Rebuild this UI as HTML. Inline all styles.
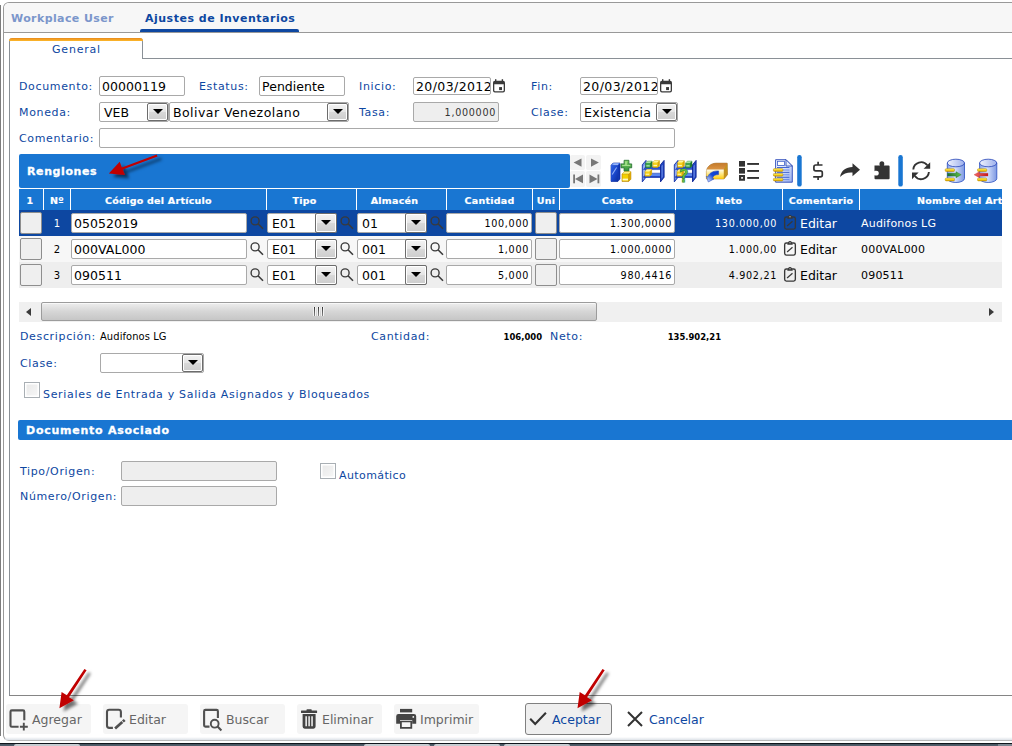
<!DOCTYPE html>
<html lang="es">
<head>
<meta charset="utf-8">
<title>Ajustes de Inventarios</title>
<style>
html,body{margin:0;padding:0;}
body{width:1012px;height:746px;position:relative;overflow:hidden;background:#fff;font-family:"DejaVu Sans","Liberation Sans",sans-serif;font-size:11px;color:#000;}
.abs,.abs *{box-sizing:border-box;}
.abs{position:absolute;}
.lbl{position:absolute;color:#0d47a1;font-size:11px;line-height:14px;letter-spacing:0.65px;margin:1px 0 0 0;white-space:nowrap;}
.inp{position:absolute;background:#fff;border:1px solid #a9a9a9;border-radius:2px;font-size:12.5px;line-height:19px;letter-spacing:0.05px;padding-left:2px;white-space:nowrap;overflow:hidden;box-sizing:border-box;color:#000;}
.dis{background:#eee;}
.num{font-size:9.6px;text-align:right;padding-right:2px;padding-left:0;line-height:20px;letter-spacing:0.7px;}
.dd{position:absolute;box-sizing:border-box;border:1px solid #6c6c6c;border-radius:2px;background:linear-gradient(#f3f3f3 0,#e6e6e6 48%,#d8d8d8 52%,#cdcdcd 100%);box-shadow:inset 0 0 0 1px #fff;}
.dd:after{content:"";position:absolute;left:50%;top:50%;margin:-3px 0 0 -5px;border:5px solid transparent;border-top:5px solid #000;border-bottom:0;}
.gbtn{position:absolute;box-sizing:border-box;border:1px solid #8e8e8e;border-radius:2px;background:#efefef;}
.hd{position:absolute;top:189px;height:21px;color:#fff;-webkit-text-stroke:0.2px #fff;font-weight:bold;font-size:9.5px;line-height:23px;text-align:center;white-space:nowrap;letter-spacing:0.25px;box-sizing:border-box;}
.sep{position:absolute;top:189px;height:21px;width:1px;background:#fff;}
.row{position:absolute;left:19px;width:983px;}
.tah{font-family:"DejaVu Sans Condensed","DejaVu Sans","Liberation Sans",sans-serif;}
.bbtn{position:absolute;top:704px;height:30px;width:85px;background:#f5f5f5;border-radius:3px;box-sizing:border-box;}
.bbtn span{position:absolute;left:26px;top:8px;font-size:12.5px;line-height:16px;color:#666;white-space:nowrap;}
</style>
</head>
<body>
<!-- outer frame -->
<div class="abs" style="left:0;top:5px;width:1px;height:731px;background:#7c7c7c;"></div>
<div class="abs" style="left:3px;top:2px;width:1020px;height:739px;border:1px solid #999;border-bottom-color:#b8b8b8;border-radius:6px;background:#fff;"></div>
<div class="abs" style="left:4px;top:3px;width:1008px;height:29px;background:#f7f7f7;border-top-left-radius:5px;"></div>
<div class="abs" style="left:4px;top:32px;width:1008px;height:1px;background:#999;"></div>
<div class="abs" style="left:5px;top:737px;width:1007px;height:3px;background:linear-gradient(rgba(225,230,236,0),#dde2e8);"></div>
<div class="abs" style="left:0;top:743px;width:1012px;height:3px;background:linear-gradient(#10161c 0,#10161c 34%,#46535f 34%,#56636f 100%);"></div>
<div class="abs" style="left:14px;top:744px;width:66px;height:2px;background:#c8cdd2;border-radius:2px 2px 0 0;"></div>
<div class="abs" style="left:364px;top:744px;width:66px;height:2px;background:#c8cdd2;border-radius:2px 2px 0 0;"></div>
<div class="abs" style="left:434px;top:744px;width:66px;height:2px;background:#c8cdd2;border-radius:2px 2px 0 0;"></div>
<div class="abs" style="left:504px;top:744px;width:66px;height:2px;background:#c8cdd2;border-radius:2px 2px 0 0;"></div>
<div class="abs" style="left:998px;top:744px;width:14px;height:2px;background:#7d8791;"></div>

<!-- top tabs -->
<div class="abs" style="left:11px;top:11px;font-size:11px;line-height:15px;font-weight:bold;color:#7b96cb;letter-spacing:0.4px;white-space:nowrap;">Workplace User</div>
<div class="abs" style="left:145px;top:11px;font-size:11px;line-height:15px;font-weight:bold;color:#0d47a1;letter-spacing:0.5px;white-space:nowrap;">Ajustes de Inventarios</div>
<div class="abs" style="left:140px;top:29px;width:159px;height:3px;background:#0d47a1;border-radius:2px 2px 0 0;"></div>

<!-- inner panel -->
<div class="abs" style="left:9px;top:58px;width:1010px;height:638px;border:1px solid #8a9096;border-bottom-color:#858585;border-right:0;"></div>
<div class="abs" style="left:9px;top:38px;width:134px;height:21px;border:1px solid #8a9096;border-bottom:0;border-top:0;background:#fff;border-radius:4px 4px 0 0;"></div>
<div class="abs" style="left:9px;top:38px;width:134px;height:3px;background:linear-gradient(#e8891a,#fdb92c);border-radius:4px 4px 0 0;"></div>
<div class="abs" style="left:52px;top:42px;font-size:11px;line-height:15px;color:#0d47a1;letter-spacing:0.8px;">General</div>

<!-- form -->
<div class="lbl" style="left:19px;top:79px;">Documento:</div>
<div class="inp" style="left:99px;top:76px;width:86px;height:20px;">00000119</div>
<div class="lbl" style="left:199px;top:79px;">Estatus:</div>
<div class="inp" style="left:259px;top:76px;width:86px;height:20px;">Pendiente</div>
<div class="lbl" style="left:359px;top:79px;">Inicio:</div>
<div class="inp" style="left:413px;top:77px;width:78px;height:18px;line-height:17px;letter-spacing:0.4px;">20/03/2012</div>
<div class="lbl" style="left:531px;top:79px;">Fin:</div>
<div class="inp" style="left:580px;top:77px;width:78px;height:18px;line-height:17px;letter-spacing:0.4px;">20/03/2012</div>

<div class="lbl" style="left:19px;top:105px;">Moneda:</div>
<div class="inp" style="left:99px;top:102px;width:70px;height:20px;padding-left:4px;">VEB</div>
<div class="dd" style="left:147px;top:103px;width:21px;height:18px;"></div>
<div class="inp" style="left:169px;top:102px;width:180px;height:20px;padding-left:3px;letter-spacing:0.45px;">Bolivar Venezolano</div>
<div class="dd" style="left:327px;top:103px;width:21px;height:18px;"></div>
<div class="lbl" style="left:359px;top:105px;">Tasa:</div>
<div class="inp dis num" style="left:413px;top:102px;width:86px;height:20px;color:#333;line-height:19px;">1,000000</div>
<div class="lbl" style="left:531px;top:105px;">Clase:</div>
<div class="inp" style="left:580px;top:102px;width:98px;height:20px;padding-left:3px;letter-spacing:0.35px;">Existencia</div>
<div class="dd" style="left:656px;top:103px;width:21px;height:18px;"></div>

<div class="lbl" style="left:19px;top:131px;">Comentario:</div>
<div class="inp" style="left:99px;top:128px;width:576px;height:20px;"></div>

<svg width="0" height="0" style="position:absolute"><defs>
<g id="cal"><path d="M1.9 1.8 H10.1 Q12 1.8 12 3.7 V11.2 Q12 13.1 10.1 13.1 H1.9 Q0 13.1 0 11.2 V3.7 Q0 1.8 1.9 1.8 Z M1.3 5 V11 Q1.3 11.8 2.1 11.8 H9.9 Q10.7 11.8 10.7 11 V5 Z" fill="#3a3a3a" fill-rule="evenodd"/><rect x="2" y="0.2" width="1.4" height="2.4" fill="#3a3a3a"/><rect x="8.7" y="0.2" width="1.4" height="2.4" fill="#3a3a3a"/><rect x="6.1" y="7.8" width="2.9" height="2.9" fill="#3a3a3a"/></g>
</defs></svg>
<svg class="abs" style="left:493px;top:79px;" width="13" height="14.5" viewBox="0 0 13 14" preserveAspectRatio="none"><use href="#cal"/></svg>
<svg class="abs" style="left:660px;top:79px;" width="13" height="14.5" viewBox="0 0 13 14" preserveAspectRatio="none"><use href="#cal"/></svg>

<!-- grid -->
<svg width="0" height="0" style="position:absolute">
<defs>
<g id="mag"><circle cx="6.1" cy="4.9" r="4" fill="none" stroke="#3a3a3a" stroke-width="1.4"/><path d="M9 7.8 L14 12.8" stroke="#3a3a3a" stroke-width="1.6"/></g>
<g id="clip"><rect x="1.65" y="2.95" width="10.7" height="12.1" rx="1.7" fill="none" stroke="#383838" stroke-width="1.35"/><path d="M4.2 4.7 L5.2 2.2 Q5.6 0.9 7 0.9 Q8.4 0.9 8.8 2.2 L9.8 4.7 Z" fill="#383838"/><circle cx="7" cy="2.7" r="0.75" fill="#a8a8a8"/><path d="M4.1 11.9 L9.5 7.3" stroke="#383838" stroke-width="1.25"/></g>
</defs>
</svg>
<div class="abs" style="left:19px;top:154px;width:551px;height:34px;background:#1976d2;border-radius:2px;"></div>
<div class="abs" style="left:27px;top:165px;font-size:11px;line-height:14px;font-weight:bold;color:#fff;letter-spacing:0.6px;-webkit-text-stroke:0.3px #fff;">Renglones</div>
<div class="abs" style="left:19px;top:189px;width:983px;height:21px;background:#1976d2;"></div>
<div class="hd" style="left:18px;width:24px;">1</div>
<div class="sep" style="left:43px;"></div>
<div class="hd" style="left:44px;width:26px;">Nº</div>
<div class="sep" style="left:70px;"></div>
<div class="hd" style="left:71px;width:195px;padding-right:20px;">Código del Artículo</div>
<div class="sep" style="left:266px;"></div>
<div class="hd" style="left:267px;width:89px;padding-right:14px;">Tipo</div>
<div class="sep" style="left:356px;"></div>
<div class="hd" style="left:357px;width:89px;padding-right:14px;">Almacén</div>
<div class="sep" style="left:446px;"></div>
<div class="hd" style="left:447px;width:85px;">Cantidad</div>
<div class="sep" style="left:532px;"></div>
<div class="hd" style="left:533px;width:26px;">Uni</div>
<div class="sep" style="left:559px;"></div>
<div class="hd" style="left:560px;width:115px;">Costo</div>
<div class="sep" style="left:675px;"></div>
<div class="hd" style="left:676px;width:106px;">Neto</div>
<div class="sep" style="left:782px;"></div>
<div class="hd" style="left:783px;width:76px;">Comentario</div>
<div class="sep" style="left:859px;"></div>
<div class="abs" style="left:860px;top:189px;width:142px;height:21px;overflow:hidden;"><div class="hd" style="left:57px;top:0;text-align:left;">Nombre del Artículo</div></div>
<div class="row" style="top:210px;height:26px;background:#0d47a1;"></div>
<div class="gbtn" style="left:20px;top:212px;width:22px;height:22px;"></div>
<div class="abs" style="left:44px;top:217px;width:26px;text-align:center;font-size:10px;line-height:13px;color:#fff;">1</div>
<div class="inp" style="left:71px;top:213px;width:176px;height:20px;padding-left:2px;">05052019</div>
<svg class="abs mg" style="left:249px;top:216px;" width="15" height="15" viewBox="0 0 15 15"><use href="#mag"/></svg>
<div class="inp" style="left:267px;top:213px;width:70px;height:20px;padding-left:4px;">E01</div>
<div class="dd" style="left:315px;top:213px;width:22px;height:20px;"></div>
<svg class="abs mg" style="left:339px;top:216px;" width="15" height="15" viewBox="0 0 15 15"><use href="#mag"/></svg>
<div class="inp" style="left:357px;top:213px;width:70px;height:20px;padding-left:4px;">01</div>
<div class="dd" style="left:405px;top:213px;width:22px;height:20px;"></div>
<svg class="abs mg" style="left:429px;top:216px;" width="15" height="15" viewBox="0 0 15 15"><use href="#mag"/></svg>
<div class="inp num" style="left:446px;top:213px;width:86px;height:20px;">100,000</div>
<div class="gbtn" style="left:535px;top:212px;width:22px;height:22px;"></div>
<div class="inp num" style="left:559px;top:213px;width:116px;height:20px;">1.300,0000</div>
<div class="abs" style="left:676px;top:217px;width:101px;text-align:right;font-size:9.6px;line-height:13px;letter-spacing:0.7px;color:#fff;">130.000,00</div>
<svg class="abs" style="left:783px;top:214px;" width="14" height="16" viewBox="0 0 14 16"><use href="#clip"/></svg>
<div class="abs" style="left:800px;top:216px;font-size:12.5px;line-height:16px;color:#fff;">Editar</div>
<div class="abs" style="left:861px;top:217px;font-size:11px;line-height:14px;letter-spacing:0.2px;color:#fff;">Audifonos LG</div>
<div class="row" style="top:236px;height:26px;background:#f7f7f7;"></div>
<div class="gbtn" style="left:20px;top:238px;width:22px;height:22px;"></div>
<div class="abs" style="left:44px;top:243px;width:26px;text-align:center;font-size:10px;line-height:13px;color:#000;">2</div>
<div class="inp" style="left:71px;top:239px;width:176px;height:20px;padding-left:2px;">000VAL000</div>
<svg class="abs mg" style="left:249px;top:242px;" width="15" height="15" viewBox="0 0 15 15"><use href="#mag"/></svg>
<div class="inp" style="left:267px;top:239px;width:70px;height:20px;padding-left:4px;">E01</div>
<div class="dd" style="left:315px;top:239px;width:22px;height:20px;"></div>
<svg class="abs mg" style="left:339px;top:242px;" width="15" height="15" viewBox="0 0 15 15"><use href="#mag"/></svg>
<div class="inp" style="left:357px;top:239px;width:70px;height:20px;padding-left:4px;">001</div>
<div class="dd" style="left:405px;top:239px;width:22px;height:20px;"></div>
<svg class="abs mg" style="left:429px;top:242px;" width="15" height="15" viewBox="0 0 15 15"><use href="#mag"/></svg>
<div class="inp num" style="left:446px;top:239px;width:86px;height:20px;">1,000</div>
<div class="gbtn" style="left:535px;top:238px;width:22px;height:22px;"></div>
<div class="inp num" style="left:559px;top:239px;width:116px;height:20px;">1.000,0000</div>
<div class="abs" style="left:676px;top:243px;width:101px;text-align:right;font-size:9.6px;line-height:13px;letter-spacing:0.7px;color:#000;">1.000,00</div>
<svg class="abs" style="left:783px;top:240px;" width="14" height="16" viewBox="0 0 14 16"><use href="#clip"/></svg>
<div class="abs" style="left:800px;top:242px;font-size:12.5px;line-height:16px;color:#000;">Editar</div>
<div class="abs" style="left:861px;top:243px;font-size:11px;line-height:14px;letter-spacing:0.2px;color:#000;">000VAL000</div>
<div class="row" style="top:262px;height:26px;background:#eeeeee;"></div>
<div class="gbtn" style="left:20px;top:264px;width:22px;height:22px;"></div>
<div class="abs" style="left:44px;top:269px;width:26px;text-align:center;font-size:10px;line-height:13px;color:#000;">3</div>
<div class="inp" style="left:71px;top:265px;width:176px;height:20px;padding-left:2px;">090511</div>
<svg class="abs mg" style="left:249px;top:268px;" width="15" height="15" viewBox="0 0 15 15"><use href="#mag"/></svg>
<div class="inp" style="left:267px;top:265px;width:70px;height:20px;padding-left:4px;">E01</div>
<div class="dd" style="left:315px;top:265px;width:22px;height:20px;"></div>
<svg class="abs mg" style="left:339px;top:268px;" width="15" height="15" viewBox="0 0 15 15"><use href="#mag"/></svg>
<div class="inp" style="left:357px;top:265px;width:70px;height:20px;padding-left:4px;">001</div>
<div class="dd" style="left:405px;top:265px;width:22px;height:20px;"></div>
<svg class="abs mg" style="left:429px;top:268px;" width="15" height="15" viewBox="0 0 15 15"><use href="#mag"/></svg>
<div class="inp num" style="left:446px;top:265px;width:86px;height:20px;">5,000</div>
<div class="gbtn" style="left:535px;top:264px;width:22px;height:22px;"></div>
<div class="inp num" style="left:559px;top:265px;width:116px;height:20px;">980,4416</div>
<div class="abs" style="left:676px;top:269px;width:101px;text-align:right;font-size:9.6px;line-height:13px;letter-spacing:0.7px;color:#000;">4.902,21</div>
<svg class="abs" style="left:783px;top:266px;" width="14" height="16" viewBox="0 0 14 16"><use href="#clip"/></svg>
<div class="abs" style="left:800px;top:268px;font-size:12.5px;line-height:16px;color:#000;">Editar</div>
<div class="abs" style="left:861px;top:269px;font-size:11px;line-height:14px;letter-spacing:0.2px;color:#000;">090511</div>

<!-- toolbar icons -->
<svg class="abs" style="left:566px;top:150px;" width="446" height="42" viewBox="566 150 446 42">
<defs>
<linearGradient id="gBlue" x1="0" y1="0" x2="1" y2="0"><stop offset="0" stop-color="#3d6fe0"/><stop offset="0.5" stop-color="#1b45c0"/><stop offset="1" stop-color="#0c2c94"/></linearGradient>
<linearGradient id="gBlueF" x1="0" y1="0" x2="1" y2="1"><stop offset="0" stop-color="#2f64e4"/><stop offset="0.5" stop-color="#1a48cc"/><stop offset="1" stop-color="#0c2fa0"/></linearGradient>
<linearGradient id="gPlus" x1="0" y1="0" x2="0" y2="1"><stop offset="0" stop-color="#86d468"/><stop offset="1" stop-color="#2f8e38"/></linearGradient>
<linearGradient id="gBoxTop" x1="0" y1="0" x2="0" y2="1"><stop offset="0" stop-color="#c47a2c"/><stop offset="1" stop-color="#e09a48"/></linearGradient>
<linearGradient id="gBoxF" x1="0" y1="0" x2="0" y2="1"><stop offset="0" stop-color="#fffdf0"/><stop offset="0.45" stop-color="#ffe98a"/><stop offset="1" stop-color="#ffcc10"/></linearGradient>
<linearGradient id="gArr" x1="1" y1="0" x2="0" y2="1"><stop offset="0" stop-color="#0a3ccc"/><stop offset="0.45" stop-color="#1448d8"/><stop offset="1" stop-color="#eef3ff"/></linearGradient>
<linearGradient id="gYel" x1="0" y1="0" x2="0" y2="1"><stop offset="0" stop-color="#fff27a"/><stop offset="0.5" stop-color="#f7d41a"/><stop offset="1" stop-color="#d9a400"/></linearGradient>
<linearGradient id="gGrn" x1="0" y1="0" x2="0" y2="1"><stop offset="0" stop-color="#8fd88a"/><stop offset="1" stop-color="#2a8f2a"/></linearGradient>
<linearGradient id="gCyl" x1="0" y1="0" x2="1" y2="0"><stop offset="0" stop-color="#8aa6ec"/><stop offset="0.45" stop-color="#d5e0fb"/><stop offset="1" stop-color="#7d98e2"/></linearGradient>
<linearGradient id="gCylTop" x1="0" y1="0" x2="1" y2="0"><stop offset="0" stop-color="#eef2fd"/><stop offset="1" stop-color="#9db0ec"/></linearGradient>
<linearGradient id="gGA" x1="0" y1="0" x2="1" y2="0"><stop offset="0" stop-color="#1c6c2e"/><stop offset="1" stop-color="#63c24a"/></linearGradient>
<linearGradient id="gRA" x1="0" y1="0" x2="1" y2="0"><stop offset="0" stop-color="#ee6a6a"/><stop offset="1" stop-color="#c81818"/></linearGradient>
<linearGradient id="gDoc" x1="0" y1="0" x2="1" y2="1"><stop offset="0" stop-color="#f6f9ff"/><stop offset="0.5" stop-color="#d3defa"/><stop offset="1" stop-color="#98aeec"/></linearGradient>
<linearGradient id="gBox" x1="0" y1="0" x2="0" y2="1"><stop offset="0" stop-color="#fff0a0"/><stop offset="1" stop-color="#f0b820"/></linearGradient>
</defs>
<!-- nav buttons -->
<g fill="#f3f3f3"><rect x="570" y="155" width="15" height="15" rx="2"/><rect x="586" y="155" width="15" height="15" rx="2"/><rect x="570" y="171" width="15" height="16" rx="2"/><rect x="586" y="171" width="15" height="16" rx="2"/></g>
<g fill="#777">
<path d="M581.5 158.5 L581.5 166.8 L573.6 162.6 Z"/>
<path d="M591 158.5 L591 166.8 L598.9 162.6 Z"/>
<path d="M583 174.5 L583 183.3 L575 178.9 Z"/><rect x="573.2" y="174.5" width="1.8" height="8.8"/>
<path d="M589.5 174.5 L589.5 183.3 L597.5 178.9 Z"/><rect x="597.5" y="174.5" width="1.8" height="8.8"/>
</g>
<!-- icon1: blue box + plus + yellow cube -->
<g>
<path d="M611 165.3 L613.2 163 L620 163 L620 179 L617.9 181.4 L611 181.4 Z" fill="#1238b4" stroke="#0a2690" stroke-width="0.6" stroke-linejoin="round"/>
<path d="M611 165.3 H617.9 V181.4 H611 Z" fill="url(#gBlueF)"/>
<path d="M611 165.3 L613.2 163 L620 163 L617.9 165.3 Z" fill="#5f8cf0"/>
<path d="M613.3 164.2 H618" stroke="#c8d8ff" stroke-width="0.8"/>
<path d="M612.2 174.5 L616.6 167.5" stroke="#a9c4ff" stroke-width="1.1" opacity="0.85"/>
<path d="M624.1 160.3 h4.8 v3.6 h2.8 v3.9 h-2.8 v3.4 h-4.8 v-3.4 h-3.1 v-3.9 h3.1 z" fill="url(#gPlus)" stroke="#1e6a2c" stroke-width="0.8" stroke-linejoin="round"/>
<path d="M625.2 161.6 h1.6 v3.3 h-1.6 z M622.2 165 h8 v1 h-8 z" fill="#b6ea9c" opacity="0.8"/>
<path d="M622 174 L624.3 171.7 L630.9 171.7 L630.9 179.2 L628.6 181.5 L622 181.5 Z" fill="#f4d000" stroke="#b07c08" stroke-width="0.6" stroke-linejoin="round"/>
<path d="M622 174 L624.3 171.7 L630.9 171.7 L628.6 174 Z" fill="#fff27a"/>
<path d="M628.6 174 L630.9 171.7 L630.9 179.2 L628.6 181.5 Z" fill="#d8a406"/>
<path d="M622.6 178.6 H628 V180.4 H622.6 Z" fill="#fff8c4"/>
<path d="M622 174 H628.6 V181.5" fill="none" stroke="#b98a10" stroke-width="0.5"/>
</g>
<!-- icon2: shelf -->
<g><path d="M642.3 164.8 L646 160.4 L646 177.2 L642.3 181.9 Z" fill="#6f90e8" stroke="#1230a4" stroke-width="0.9" stroke-linejoin="round"/><path d="M643.2 166.5 L645.2 164 L645.2 176 L643.2 178.8 Z" fill="#9db6f4"/><path d="M643.5 177.4 L646 173.2 L663.6 173.2 L661 177.4 Z" fill="#5b88ee" stroke="#1230a4" stroke-width="0.5"/><path d="M643.5 176.2 H661 V177.6 H643.5 Z" fill="#1838b4"/><path d="M643.5 169.6 L645.6 166.8 L663.6 166.8 L661 169.6 Z" fill="#2c54d2" stroke="#1230a4" stroke-width="0.5"/><path d="M660.5 164.8 L664.1 160.4 L664.1 177.2 L660.5 181.9 Z" fill="#2348c4" stroke="#0e2694" stroke-width="0.9" stroke-linejoin="round"/><path d="M661.6 166 L662.6 164.8 L662.6 177 L661.6 178.4 Z" fill="#7d9cec" opacity="0.9"/><path d="M645.0 171.4 L646.8 169.6 L651.6 169.6 L651.6 174.4 L649.8 176.2 L645.0 176.2 Z" fill="#f6d21c" stroke="#b8860b" stroke-width="0.5"/><path d="M645.0 171.4 L646.8 169.6 L651.6 169.6 L649.8 171.4 Z" fill="#fff59a"/><path d="M649.8 171.4 L651.6 169.6 L651.6 174.4 L649.8 176.2 Z" fill="#d9a80a"/><rect x="645.6" y="173.7" width="3.6" height="1.1" fill="#fffbd0" opacity="0.85"/><path d="M645.7 163.0 L647.5 161.2 L652.1 161.2 L652.1 166.0 L650.3 167.8 L645.7 167.8 Z" fill="#3fa64a" stroke="#1a6a24" stroke-width="0.5"/><path d="M645.7 163.0 L647.5 161.2 L652.1 161.2 L650.3 163.0 Z" fill="#a8e0a0"/><path d="M650.3 163.0 L652.1 161.2 L652.1 166.0 L650.3 167.8 Z" fill="#1f7a2c"/><rect x="646.3" y="165.3" width="3.4" height="1.1" fill="#d8f4d0" opacity="0.85"/><path d="M652.8 162.4 L654.6 160.6 L659.4 160.6 L659.4 165.7 L657.6 167.5 L652.8 167.5 Z" fill="#f6d21c" stroke="#b8860b" stroke-width="0.5"/><path d="M652.8 162.4 L654.6 160.6 L659.4 160.6 L657.6 162.4 Z" fill="#fff59a"/><path d="M657.6 162.4 L659.4 160.6 L659.4 165.7 L657.6 167.5 Z" fill="#d9a80a"/><rect x="653.4" y="164.9" width="3.6" height="1.1" fill="#fffbd0" opacity="0.85"/></g>
<!-- icon3: shelf with ? -->
<g><path d="M674.3 164.8 L678 160.4 L678 177.2 L674.3 181.9 Z" fill="#6f90e8" stroke="#1230a4" stroke-width="0.9" stroke-linejoin="round"/><path d="M675.2 166.5 L677.2 164 L677.2 176 L675.2 178.8 Z" fill="#9db6f4"/><path d="M675.5 177.4 L678 173.2 L695.6 173.2 L693 177.4 Z" fill="#5b88ee" stroke="#1230a4" stroke-width="0.5"/><path d="M675.5 176.2 H693 V177.6 H675.5 Z" fill="#1838b4"/><path d="M675.5 169.6 L677.6 166.8 L695.6 166.8 L693 169.6 Z" fill="#2c54d2" stroke="#1230a4" stroke-width="0.5"/><path d="M692.5 164.8 L696.1 160.4 L696.1 177.2 L692.5 181.9 Z" fill="#2348c4" stroke="#0e2694" stroke-width="0.9" stroke-linejoin="round"/><path d="M693.6 166 L694.6 164.8 L694.6 177 L693.6 178.4 Z" fill="#7d9cec" opacity="0.9"/><path d="M677.0 171.4 L678.8 169.6 L683.6 169.6 L683.6 174.4 L681.8 176.2 L677.0 176.2 Z" fill="#f6d21c" stroke="#b8860b" stroke-width="0.5"/><path d="M677.0 171.4 L678.8 169.6 L683.6 169.6 L681.8 171.4 Z" fill="#fff59a"/><path d="M681.8 171.4 L683.6 169.6 L683.6 174.4 L681.8 176.2 Z" fill="#d9a80a"/><rect x="677.6" y="173.7" width="3.6" height="1.1" fill="#fffbd0" opacity="0.85"/><path d="M677.5 162.5 L679.3 160.7 L684.3 160.7 L684.3 165.8 L682.5 167.6 L677.5 167.6 Z" fill="#f6d21c" stroke="#b8860b" stroke-width="0.5"/><path d="M677.5 162.5 L679.3 160.7 L684.3 160.7 L682.5 162.5 Z" fill="#fff59a"/><path d="M682.5 162.5 L684.3 160.7 L684.3 165.8 L682.5 167.6 Z" fill="#d9a80a"/><rect x="678.1" y="165.0" width="3.8" height="1.1" fill="#fffbd0" opacity="0.85"/><path d="M685.6 163.0 L687.4 161.2 L692.0 161.2 L692.0 166.0 L690.2 167.8 L685.6 167.8 Z" fill="#3fa64a" stroke="#1a6a24" stroke-width="0.5"/><path d="M685.6 163.0 L687.4 161.2 L692.0 161.2 L690.2 163.0 Z" fill="#a8e0a0"/><path d="M690.2 163.0 L692.0 161.2 L692.0 166.0 L690.2 167.8 Z" fill="#1f7a2c"/><rect x="686.2" y="165.3" width="3.4" height="1.1" fill="#d8f4d0" opacity="0.85"/></g>
<text x="679.3" y="182.2" font-family="'DejaVu Sans','Liberation Sans',sans-serif" font-size="17.5" fill="#63bd42" stroke="#2a8424" stroke-width="1.1" paint-order="stroke">?</text>
<!-- icon4: box with arrow -->
<g>
<path d="M706.4 171 C707 167 710.5 163.4 716 163.2 L727.2 163.2 L727.4 174.8 L723.9 178.9 L706.4 178.9 Z" fill="#c88a2c" stroke="#8e5e1c" stroke-width="0.6" stroke-linejoin="round"/>
<path d="M706.4 171 C707 167 710.5 163.4 716 163.2 L727.2 163.2 L723.9 169.4 L706.6 169.6 Z" fill="url(#gBoxTop)"/>
<path d="M706.4 169.5 H723.9 V178.9 H706.4 Z" fill="url(#gBoxF)"/>
<path d="M723.9 169.4 L727.2 163.4 L727.4 174.8 L723.9 178.9 Z" fill="#c4921e"/>
<path d="M718.6 170.9 C711.8 170.6 708.6 174 707.8 177 L706.3 176.4 L708.3 182 L714 178.9 L712.4 178.3 C713.2 176 714.8 174.6 718.6 174.6 Z" fill="url(#gArr)" stroke="#1a3fb4" stroke-width="0.5" stroke-linejoin="round"/>
</g>
<!-- icon5: list -->
<g fill="#333">
<rect x="739" y="161" width="6" height="5.6"/><rect x="739" y="168" width="6" height="5.6"/>
<path d="M739 175 h6 v5.7 h-6 z M741.2 177 v1.8 h1.7 v-1.8 z" fill-rule="evenodd"/>
<rect x="747.2" y="163" width="11.8" height="1.9"/><rect x="747.2" y="170" width="11.8" height="1.9"/><rect x="747.2" y="177" width="11.8" height="1.9"/>
</g>
<!-- icon6: document with yellow bars -->
<g>
<path d="M775.6 159.7 L786 159.7 L792.3 166 L792.3 182.2 L775.6 182.2 Z" fill="url(#gDoc)" stroke="#2846b8" stroke-width="0.9" stroke-linejoin="round"/>
<path d="M786 159.7 L786 166 L792.3 166 Z" fill="#e4ebfc" stroke="#2040b0" stroke-width="0.8" stroke-linejoin="round"/>
<rect x="777.6" y="161.3" width="7" height="4.2" fill="#fff" stroke="#3a5cc8" stroke-width="0.8"/>
<path d="M777 167.5 H789.4 M777 172.4 H789.4 M777 177.3 H789.4" stroke="#3358cc" stroke-width="0.9"/>
<path d="M783 170 H789.4 M783 174.8 H789.4 M783 179.6 H789.4" stroke="#5a7ee2" stroke-width="0.8"/>
<g fill="url(#gYel)" stroke="#a87c08" stroke-width="0.5"><rect x="773.4" y="168.6" width="9.5" height="2.8" rx="1"/><rect x="773.4" y="173.4" width="9.5" height="2.8" rx="1"/><rect x="773.4" y="178.2" width="9.5" height="2.8" rx="1"/></g>
</g>
<!-- separators -->
<rect x="797.2" y="155" width="4.5" height="31.6" rx="2.2" fill="#1976d2"/>
<rect x="898.3" y="155" width="4.5" height="31.6" rx="2.2" fill="#1976d2"/>
<!-- dollar -->
<g fill="none" stroke="#333" stroke-width="1.7">
<path d="M822.5 165 H815.8 Q813.9 165 813.9 166.9 V169 Q813.9 170.9 815.8 170.9 H820.4 Q822.3 170.9 822.3 172.8 V175 Q822.3 176.9 820.4 176.9 H813.2"/>
<path d="M818.1 161.8 V165 M818.1 176.9 V180"/>
</g>
<!-- share arrow -->
<path d="M840 177 C841.5 170 846 167.3 852.5 167 L852.5 163.3 L860 169.8 L852.5 176.3 L852.5 172.6 C847.5 172.3 843.5 173.5 840 177 Z" fill="#333"/>
<!-- puzzle -->
<path d="M874.5 165.5 H880 C879 164.6 879.3 161.2 881.9 161.2 C884.5 161.2 884.8 164.6 883.8 165.5 H888.6 Q889.6 165.5 889.6 166.5 V178.2 Q889.6 179.2 888.6 179.2 H875.5 Q874.5 179.2 874.5 178.2 V175.2 C876.6 176.2 878.8 175.3 878.8 173.2 C878.8 171.1 876.6 170.3 874.5 171.2 Z" fill="#333"/>
<!-- refresh -->
<g fill="none" stroke="#333" stroke-width="1.9">
<path d="M913.3 169.5 A7.8 7.8 0 0 1 927.3 165.3"/>
<path d="M928.9 172 A7.8 7.8 0 0 1 914.9 176"/>
</g>
<path d="M930.2 162.2 V168.8 H923.6 Z" fill="#333"/>
<path d="M912 179.2 V172.6 H918.6 Z" fill="#333"/>
<!-- db icons -->
<g id="cyl">
<path d="M947.3 163 V178.5 A8.6 4 0 0 0 964.5 178.5 V163 Z" fill="url(#gCyl)" stroke="#2a4fc0" stroke-width="0.8"/>
<ellipse cx="955.9" cy="163" rx="8.6" ry="3.8" fill="url(#gCylTop)" stroke="#2444b8" stroke-width="0.8"/>
</g>
<g fill="url(#gYel)" stroke="#b88a00" stroke-width="0.5"><rect x="945.2" y="168.7" width="9.3" height="2.8" rx="1"/><rect x="945.2" y="178.1" width="9.3" height="2.8" rx="1"/></g>
<path d="M947.5 173.3 H956 V171.7 L961.2 174.7 L956 177.7 V176.1 H947.5 Z" fill="url(#gGA)" stroke="#1d6f28" stroke-width="0.4"/>
<use href="#cyl" x="32.3"/>
<g fill="url(#gYel)" stroke="#b88a00" stroke-width="0.5"><rect x="977.5" y="168.7" width="9.3" height="2.8" rx="1"/><rect x="977.5" y="178.1" width="9.3" height="2.8" rx="1"/></g>
<path d="M988 173.3 H979.3 V171.7 L974 174.7 L979.3 177.7 V176.1 H988 Z" fill="url(#gRA)" stroke="#c03030" stroke-width="0.3"/>
</svg>

<!-- scrollbar -->
<div class="abs" style="left:19px;top:302px;width:983px;height:20px;background:#f0f0f0;"></div>
<div class="abs" style="left:26px;top:308px;width:0;height:0;border:4px solid transparent;border-right:5px solid #3a3a3a;border-left:0;"></div>
<div class="abs" style="left:989px;top:308px;width:0;height:0;border:4px solid transparent;border-left:5px solid #3a3a3a;border-right:0;"></div>
<div class="abs" style="left:41px;top:302px;width:556px;height:19px;border:1px solid #9c9c9c;border-radius:2px;background:linear-gradient(#eeeeee,#d6d6d6 50%,#c6c6c6);box-shadow:inset 0 1px 0 #f8f8f8;"></div>
<div class="abs" style="left:314px;top:307px;width:1px;height:9px;background:linear-gradient(#333,#888);box-shadow:1px 0 0 #f4f4f4,-1px 0 0 #f0f0f0;"></div><div class="abs" style="left:318px;top:307px;width:1px;height:9px;background:linear-gradient(#333,#888);box-shadow:1px 0 0 #f4f4f4,-1px 0 0 #f0f0f0;"></div><div class="abs" style="left:322px;top:307px;width:1px;height:9px;background:linear-gradient(#333,#888);box-shadow:1px 0 0 #f4f4f4,-1px 0 0 #f0f0f0;"></div>

<!-- totals -->
<div class="lbl" style="left:20px;top:329px;">Descripción:</div>
<div class="abs tah" style="left:100px;top:330px;font-size:11px;line-height:13px;letter-spacing:0.1px;color:#000;">Audifonos LG</div>
<div class="lbl" style="left:371px;top:329px;">Cantidad:</div>
<div class="abs tah" style="left:443px;top:330px;width:100px;text-align:right;font-size:9.4px;line-height:13px;font-weight:bold;color:#000;margin-left:-1px;">106,000</div>
<div class="lbl" style="left:550px;top:329px;">Neto:</div>
<div class="abs tah" style="left:622px;top:330px;width:100px;text-align:right;font-size:9.4px;line-height:13px;font-weight:bold;color:#000;margin-left:-1px;">135.902,21</div>
<div class="lbl" style="left:20px;top:356px;">Clase:</div>
<div class="inp" style="left:100px;top:353px;width:104px;height:20px;"></div>
<div class="dd" style="left:182px;top:354px;width:21px;height:18px;"></div>
<div class="abs" style="left:24px;top:382px;width:16px;height:16px;border:1px solid #a9afb4;background:linear-gradient(135deg,#e8e8e8,#f7f7f7);box-shadow:inset 0 0 0 1.5px #fff;"></div>
<div class="lbl" style="left:43px;top:387px;letter-spacing:0.68px;">Seriales de Entrada y Salida Asignados y Bloqueados</div>

<!-- documento asociado -->
<div class="abs" style="left:18px;top:420px;width:1000px;height:20px;background:#1976d2;border-radius:2px;"></div>
<div class="abs" style="left:26px;top:424px;font-size:11px;line-height:14px;font-weight:bold;color:#fff;letter-spacing:0.75px;-webkit-text-stroke:0.3px #fff;">Documento Asociado</div>
<div class="lbl" style="left:20px;top:464px;">Tipo/Origen:</div>
<div class="inp dis" style="left:121px;top:461px;width:156px;height:20px;"></div>
<div class="lbl" style="left:20px;top:489px;">Número/Origen:</div>
<div class="inp dis" style="left:121px;top:486px;width:156px;height:20px;"></div>
<div class="abs" style="left:320px;top:463px;width:16px;height:16px;border:1px solid #a9afb4;background:linear-gradient(135deg,#e8e8e8,#f7f7f7);box-shadow:inset 0 0 0 1.5px #fff;"></div>
<div class="lbl" style="left:339px;top:468px;letter-spacing:0.4px;">Automático</div>

<!-- bottom toolbar -->
<div class="bbtn" style="left:6px;"><span>Agregar</span></div>
<div class="bbtn" style="left:103px;"><span>Editar</span></div>
<div class="bbtn" style="left:200px;"><span>Buscar</span></div>
<div class="bbtn" style="left:297px;"><span style="left:25px;">Eliminar</span></div>
<div class="bbtn" style="left:394px;"><span>Imprimir</span></div>
<div class="abs" style="left:525px;top:703px;width:87px;height:32px;border:1px solid #808080;border-radius:3px;background:#efefef;"></div>
<div class="abs" style="left:552px;top:712px;font-size:12.5px;line-height:16px;color:#0d47a1;">Aceptar</div>
<div class="abs" style="left:649px;top:712px;font-size:12.5px;line-height:16px;letter-spacing:-0.05px;color:#0d47a1;">Cancelar</div>
<svg class="abs" style="left:0;top:700px;" width="720" height="40" viewBox="0 700 720 40">
<g fill="none" stroke="#505050" stroke-width="2.1" stroke-linejoin="round">
<path d="M18.6 726.7 H11.8 Q10.5 726.7 10.5 725.4 V711.7 Q10.5 710.4 11.8 710.4 H23 Q24.3 710.4 24.3 711.7 V720.3"/>
<path d="M23.8 722.7 V730.6 M19.9 726.7 H27.8" stroke-width="1.9"/>
<path d="M112.9 727.9 H109.3 Q107 727.9 107 725.6 V712.1 Q107 709.8 109.3 709.8 H118.6 Q120.9 709.8 120.9 712.1 V717.6"/>
<path d="M115.1 728.6 L122.3 722.1 M122.9 721.5 L124.7 719.9" stroke-width="2.7"/>
<path d="M209.5 726.6 H205.4 Q204.1 726.6 204.1 725.3 V711.2 Q204.1 709.9 205.4 709.9 H216.6 Q217.9 709.9 217.9 711.2 V718" />
<circle cx="214.7" cy="723.7" r="3.9" stroke-width="1.9"/>
<path d="M217.6 726.6 L221.4 730.4" stroke-width="2.1"/>
</g>

<!-- trash -->
<g fill="#444">
<rect x="301" y="710.6" width="16.1" height="2.3" rx="0.5"/><rect x="306.5" y="709.3" width="5.2" height="2" rx="0.6"/>
<path d="M302.6 714 H315.6 V726.6 Q315.6 728.7 313.5 728.7 H304.7 Q302.6 728.7 302.6 726.6 Z M305.4 716.2 V726.2 H306.9 V716.2 Z M308.35 716.2 V726.2 H309.85 V716.2 Z M311.3 716.2 V726.2 H312.8 V716.2 Z" fill-rule="evenodd"/>
</g>
<!-- printer -->
<g fill="#444">
<rect x="400" y="708.9" width="12.2" height="3.5"/>
<path d="M398.5 713.9 H413.9 Q416.2 713.9 416.2 716.2 V723.8 H412.2 V720 H400 V723.8 H396.2 V716.2 Q396.2 713.9 398.5 713.9 Z M413.3 716 A0.9 0.9 0 1 0 413.3 717.8 A0.9 0.9 0 1 0 413.3 716 Z" fill-rule="evenodd"/>
<path d="M400 720.8 H412.2 V728.7 H400 Z M401.8 722.3 V727 H410.4 V722.3 Z" fill-rule="evenodd"/>
</g>
<!-- check and cross -->
<path d="M530.2 718.7 L535.2 724 L545.9 712.8" fill="none" stroke="#333" stroke-width="2.1"/>
<path d="M628 712 L642 726 M642 712 L628 726" fill="none" stroke="#333" stroke-width="2"/>
</svg>

<!-- red annotation arrows -->
<svg class="abs" style="left:0;top:0;pointer-events:none;" width="1012" height="746" viewBox="0 0 1012 746">
<defs><filter id="ash" x="-30%" y="-30%" width="170%" height="170%"><feDropShadow dx="4.2" dy="3.3" stdDeviation="1.8" flood-color="#000" flood-opacity="0.55"/></filter></defs>
<g fill="#c00000" stroke="none" filter="url(#ash)">
<path d="M156.7 154.4 L157.6 156.6 L122.8 169.6 L124.9 174.9 L108.8 173.5 L119.7 161.8 L121.9 167.4 Z"/>
<path id="darr" d="M84.4 669 L86.6 670.2 L69 697.2 L73.9 700.2 L59.4 708.3 L61.6 692 L66.8 695.3 Z"/>
<use href="#darr" x="518.1"/>
</g>
</svg>

</body>
</html>
